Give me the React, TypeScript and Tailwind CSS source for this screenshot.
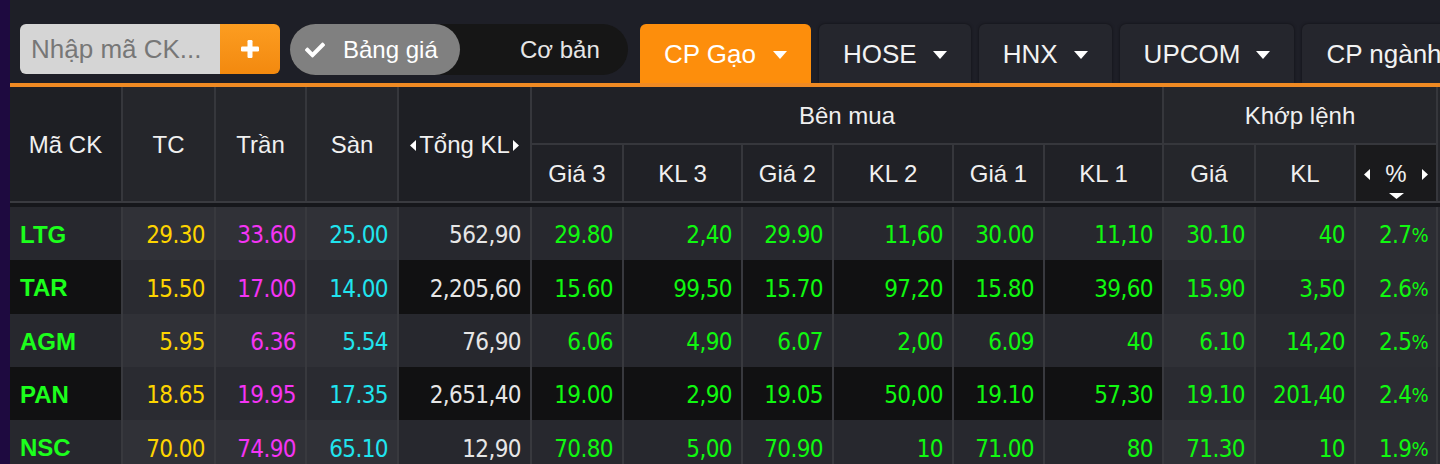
import React from "react";
import { FaCheck } from "react-icons/fa";

const cols =
  "grid-cols-[111px_91px_89px_90px_131px_90px_117px_89px_118px_89px_117px_90px_98px_80px_100px]";

type Row = {
  sym: string;
  tc: string;
  tran: string;
  san: string;
  tong: string;
  bid: string[];
  gia: string;
  kl: string;
  pct: string;
};

const rows: Row[] = [
  { sym: "LTG", tc: "29.30", tran: "33.60", san: "25.00", tong: "562,90", bid: ["29.80", "2,40", "29.90", "11,60", "30.00", "11,10"], gia: "30.10", kl: "40", pct: "2.7" },
  { sym: "TAR", tc: "15.50", tran: "17.00", san: "14.00", tong: "2,205,60", bid: ["15.60", "99,50", "15.70", "97,20", "15.80", "39,60"], gia: "15.90", kl: "3,50", pct: "2.6" },
  { sym: "AGM", tc: "5.95", tran: "6.36", san: "5.54", tong: "76,90", bid: ["6.06", "4,90", "6.07", "2,00", "6.09", "40"], gia: "6.10", kl: "14,20", pct: "2.5" },
  { sym: "PAN", tc: "18.65", tran: "19.95", san: "17.35", tong: "2,651,40", bid: ["19.00", "2,90", "19.05", "50,00", "19.10", "57,30"], gia: "19.10", kl: "201,40", pct: "2.4" },
  { sym: "NSC", tc: "70.00", tran: "74.90", san: "65.10", tong: "12,90", bid: ["70.80", "5,00", "70.90", "10", "71.00", "80"], gia: "71.30", kl: "10", pct: "1.9" },
];

const rowHeights = ["h-[53px]", "h-[54px]", "h-[53px]", "h-[53px]", "h-[54px]"];

const sans = "[font-family:'Liberation_Sans',Arial,sans-serif]";
const numFont =
  "[font-family:'DejaVu_Sans_Condensed','DejaVu_Sans',sans-serif] [font-stretch:condensed] text-[24px] tracking-[-0.6px]";

function Caret() {
  return (
    <svg width="14" height="8" viewBox="0 0 14 8" className="shrink-0">
      <path d="M0 0H14L7 8Z" fill="#ffffff" />
    </svg>
  );
}

function TriLeft() {
  return (
    <svg width="6" height="11" viewBox="0 0 6 11" className="shrink-0">
      <path d="M6 0V11L0 5.5Z" fill="#ffffff" />
    </svg>
  );
}

function TriRight() {
  return (
    <svg width="6" height="11" viewBox="0 0 6 11" className="shrink-0">
      <path d="M0 0V11L6 5.5Z" fill="#ffffff" />
    </svg>
  );
}

function Num({ bg, color, children }: { bg: string; color: string; children: React.ReactNode }) {
  return (
    <div className={`${bg} ${color} ${numFont} flex items-center justify-end pr-[9px] pt-[3px] leading-none`}>
      {children}
    </div>
  );
}

function BodyRow({ r, dark, h }: { r: Row; dark: boolean; h: string }) {
  const base = dark ? "bg-[#111112]" : "bg-[#27282e]";
  const ref = dark ? "bg-[#2a2b31]" : "bg-[#303137]";
  const gia = dark ? "bg-[#2a2b31]" : "bg-[#303137]";
  const kl = dark ? "bg-[#26272d]" : "bg-[#2a2b31]";
  const pct = dark ? "bg-[#2b2c32]" : "bg-[#2c2d33]";
  const green = "text-[#10f810]";
  return (
    <div className={`grid ${cols} gap-x-[2px] bg-[#38393e] shrink-0 ${h}`}>
      <div className={`${base} ${sans} flex items-center pl-[10px] pt-[2px] font-bold text-[24px] text-[#1cff1c]`}>
        {r.sym}
      </div>
      <Num bg={ref} color="text-[#fdd400]">{r.tc}</Num>
      <Num bg={ref} color="text-[#f434f4]">{r.tran}</Num>
      <Num bg={ref} color="text-[#20e4ee]">{r.san}</Num>
      <Num bg={base} color="text-[#e6e6e6]">{r.tong}</Num>
      {r.bid.map((b, i) => (
        <Num key={i} bg={base} color={green}>
          {b}
        </Num>
      ))}
      <Num bg={gia} color={green}>{r.gia}</Num>
      <Num bg={kl} color={green}>{r.kl}</Num>
      <div className={`${pct} ${green} ${numFont} flex items-center justify-end pr-[8px] pt-[3px] leading-none`}>
        {r.pct}
        <span className="text-[20px]">%</span>
      </div>
      <div className={kl}></div>
    </div>
  );
}

export default function App() {
  const head = "flex items-center justify-center pt-[2px] text-[24px] text-[#f0f0f0]";
  const tabs = ["HOSE", "HNX", "UPCOM"];
  return (
    <div className={`w-[1440px] h-[464px] overflow-hidden flex bg-[#1e0a40] ${sans}`}>
      <div className="w-[10px] shrink-0 bg-[#1e0a40]"></div>
      <div className="flex-1 min-w-0 flex flex-col overflow-hidden">
        {/* Top bar */}
        <div className="h-[83px] shrink-0 flex items-start pt-[24px] pl-[10px] bg-[#1e1f27] overflow-hidden">
          <div className="flex h-[50px] w-[260px] shrink-0 rounded-[6px] overflow-hidden">
            <div className="w-[200px] bg-[#d5d5d5] flex items-center pl-[11px] text-[26px] text-[#777777] whitespace-nowrap">
              Nhập mã CK...
            </div>
            <div className="w-[60px] bg-gradient-to-b from-[#fc9d20] to-[#f3890e] flex items-center justify-center">
              <svg width="18" height="18" viewBox="0 0 18 18">
                <rect x="6.5" y="0" width="5" height="18" rx="1.2" fill="#ffffff" />
                <rect x="0" y="6.5" width="18" height="5" rx="1.2" fill="#ffffff" />
              </svg>
            </div>
          </div>
          <div className="ml-[10px] h-[51px] w-[338px] shrink-0 rounded-full bg-[#161616] flex items-center">
            <div className="h-full w-[170px] rounded-full bg-[#808080] flex items-center pl-[15px] gap-[18px] text-white text-[24px]">
              <FaCheck size={20} color="#ffffff" />
              <span>Bảng giá</span>
            </div>
            <span className="ml-[60px] text-[24px] text-[#e6e6e6]">Cơ bản</span>
          </div>
          <div className="ml-[12px] flex gap-[8px] shrink-0">
            <div className="h-[59px] rounded-t-[6px] bg-[#fd8e0c] px-[24px] pt-[2px] flex items-center gap-[17px] text-[26px] text-white shrink-0">
              <span>CP Gạo</span>
              <Caret />
            </div>
            {tabs.map((t) => (
              <div
                key={t}
                className="h-[59px] rounded-t-[6px] bg-[#25262d] shadow-[0_0_3px_rgba(0,0,0,0.5)] px-[24px] pt-[2px] flex items-center gap-[16px] text-[26px] text-[#f2f2f2] shrink-0"
              >
                <span>{t}</span>
                <Caret />
              </div>
            ))}
            <div className="h-[59px] rounded-t-[6px] bg-[#25262d] shadow-[0_0_3px_rgba(0,0,0,0.5)] px-[24px] pt-[2px] flex items-center gap-[16px] text-[26px] text-[#f2f2f2] shrink-0 whitespace-nowrap">
              <span>CP ngành</span>
              <Caret />
            </div>
          </div>
        </div>
        {/* Orange line */}
        <div className="h-[4px] shrink-0 bg-[#ef8a23]"></div>
        {/* Table header */}
        <div className={`grid ${cols} grid-rows-[56px_56px] gap-[2px] bg-[#36373c] shrink-0`}>
          <div className={`${head} row-span-2 bg-[#1e1f24]`}>Mã CK</div>
          <div className={`${head} row-span-2 bg-[#25262b]`}>TC</div>
          <div className={`${head} row-span-2 bg-[#25262b]`}>Trần</div>
          <div className={`${head} row-span-2 bg-[#25262b]`}>Sàn</div>
          <div className={`${head} row-span-2 bg-[#1e1f24] gap-[3px]`}>
            <TriLeft />
            <span>Tổng KL</span>
            <TriRight />
          </div>
          <div className={`${head} col-span-6 bg-[#202126]`}>Bên mua</div>
          <div className={`${head} col-span-3 bg-[#25262b]`}>Khớp lệnh</div>
          <div className={`${head} row-span-2 bg-[#25262b]`}></div>
          <div className={`${head} bg-[#202126]`}>Giá 3</div>
          <div className={`${head} bg-[#202126]`}>KL 3</div>
          <div className={`${head} bg-[#202126]`}>Giá 2</div>
          <div className={`${head} bg-[#202126]`}>KL 2</div>
          <div className={`${head} bg-[#202126]`}>Giá 1</div>
          <div className={`${head} bg-[#202126]`}>KL 1</div>
          <div className={`${head} bg-[#25262b]`}>Giá</div>
          <div className={`${head} bg-[#25262b]`}>KL</div>
          <div className="bg-[#1a1a1c] flex flex-col items-center pt-[15px] text-[24px] text-[#f0f0f0]">
            <div className="w-full flex items-center justify-between px-[8px] leading-[28px]">
              <TriLeft />
              <span>%</span>
              <TriRight />
            </div>
            <svg width="15" height="6" viewBox="0 0 15 6" className="mt-[5px]">
              <path d="M0 0H15L7.5 6Z" fill="#ffffff" />
            </svg>
          </div>
        </div>
        <div className="h-[2px] shrink-0 bg-[#3a3b40]"></div>
        <div className="h-[4px] shrink-0 bg-[#16171b]"></div>
        {/* Body */}
        {rows.map((r, i) => (
          <BodyRow key={r.sym} r={r} dark={i % 2 === 1} h={rowHeights[i]} />
        ))}
      </div>
    </div>
  );
}
